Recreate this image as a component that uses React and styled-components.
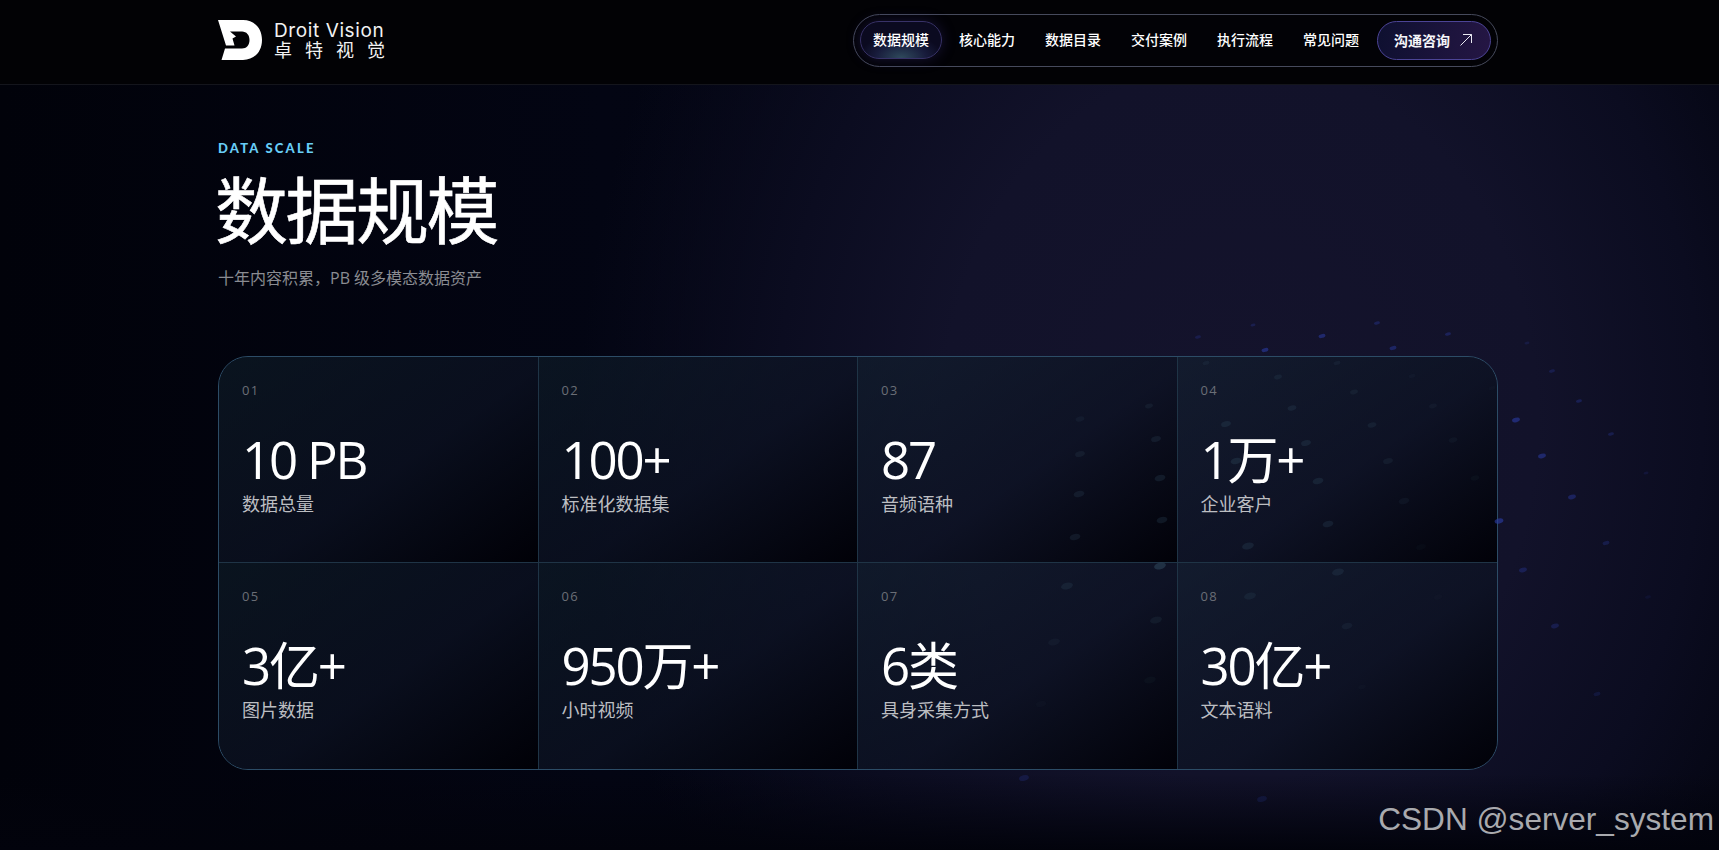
import React from 'react'
import styled, { createGlobalStyle } from 'styled-components'

const GlobalStyle = createGlobalStyle`
  html, body { margin: 0; padding: 0; background: #01020a; }
  body { font-family: "Open Sans", "Noto Sans CJK SC", sans-serif; color: #fff; overflow: hidden; }
`

const stats = [
  { no: '01', value: '10 PB', label: '数据总量' },
  { no: '02', value: '100+', label: '标准化数据集' },
  { no: '03', value: '87', label: '音频语种' },
  { no: '04', value: '1万+', label: '企业客户' },
  { no: '05', value: '3亿+', label: '图片数据' },
  { no: '06', value: '950万+', label: '小时视频' },
  { no: '07', value: '6类', label: '具身采集方式' },
  { no: '08', value: '30亿+', label: '文本语料' },
]

const links = ['核心能力', '数据目录', '交付案例', '执行流程', '常见问题']

// particles behind the glass: x, y, rx, opacity
const blueDots = [
  [1198, 337, 3, 0.28], [1253, 325, 2.5, 0.3], [1322, 336, 3.5, 0.55], [1265, 350, 3.5, 0.6],
  [1377, 323, 3, 0.38], [1448, 334, 3, 0.4], [1393, 348, 3.5, 0.48], [1527, 343, 2.5, 0.22],
  [1552, 371, 3, 0.3], [1579, 401, 3, 0.36], [1516, 420, 4, 0.62], [1611, 434, 3, 0.32],
  [1542, 456, 4, 0.55], [1646, 473, 2.5, 0.18], [1572, 497, 4, 0.45], [1499, 521, 4.5, 0.65],
  [1606, 543, 3.5, 0.3], [1523, 570, 4, 0.36], [1555, 626, 4, 0.32], [1648, 597, 3, 0.12],
  [1597, 694, 3.5, 0.2], [1024, 778, 5, 0.26], [1262, 799, 5, 0.2],
]

const glassDots = [
  [1149, 406, 4, 0.2], [1080, 419, 4.5, 0.16], [1156, 439, 5, 0.25], [1080, 454, 5, 0.22],
  [1160, 478, 5.5, 0.28], [1079, 494, 5.5, 0.25], [1162, 520, 5.5, 0.28], [1075, 537, 5.5, 0.25],
  [1160, 566, 6, 0.55], [1226, 424, 5, 0.3], [1292, 408, 4.5, 0.28], [1278, 377, 4, 0.24],
  [1206, 363, 3.5, 0.18], [1337, 363, 3.5, 0.18], [1354, 392, 4, 0.2], [1306, 443, 5, 0.3],
  [1236, 461, 5.5, 0.34], [1318, 481, 5.5, 0.3], [1328, 524, 5.5, 0.28], [1248, 546, 6, 0.3],
  [1412, 376, 3.5, 0.1], [1492, 388, 3.5, 0.07], [1433, 406, 4, 0.14], [1372, 425, 4.5, 0.24],
  [1453, 440, 4.5, 0.12], [1388, 461, 5, 0.2], [1475, 478, 4.5, 0.09], [1404, 501, 5.5, 0.14],
  [1421, 547, 5, 0.07], [1067, 586, 6, 0.26], [1338, 572, 6, 0.28], [1250, 596, 6, 0.24],
  [1156, 620, 6, 0.2], [1347, 626, 5.5, 0.18], [1054, 642, 6, 0.14], [1150, 680, 6, 0.09],
  [1041, 704, 5.5, 0.06], [1438, 597, 4.5, 0.06], [1362, 687, 4, 0.06],
]

function Particles() {
  const ellipse = ([x, y, rx, opacity], fill) => (
    <ellipse
      key={`${x}-${y}`}
      cx={x}
      cy={y}
      rx={rx}
      ry={rx * 0.55}
      fill={fill}
      opacity={opacity}
      transform={`rotate(-14 ${x} ${y})`}
    />
  )
  return (
    <ParticleField viewBox="0 0 1719 850" aria-hidden="true">
      {blueDots.map(d => ellipse(d, '#2a3aa0'))}
      {glassDots.map(d => ellipse(d, '#30495c'))}
    </ParticleField>
  )
}

function Logo() {
  return (
    <svg width="44" height="40" viewBox="0 0 44 40">
      <path
        fill="#fff"
        d="M0 0H25C36 0 44 8 44 20C44 32 36 40 25 40H3.5L7 28.5H24C28.5 28.5 31.5 25 31.5 20C31.5 15 28.5 11.5 24 11.5H12L18 16.5L14.5 18.5L16.5 25.5H8Z"
      />
    </svg>
  )
}

export default function App() {
  return (
    <Page>
      <GlobalStyle />
      <Particles />
      <Header>
        <HeaderInner>
          <Brand>
            <Logo />
            <BrandText>
              <BrandName>Droit Vision</BrandName>
              <BrandCn>卓特视觉</BrandCn>
            </BrandText>
          </Brand>
          <Nav>
            <ActiveLink>数据规模</ActiveLink>
            {links.map(l => <NavLink key={l}>{l}</NavLink>)}
            <Contact>
              沟通咨询
              <svg width="14" height="14" viewBox="0 0 14 14" fill="none" stroke="#e8e8f0" strokeWidth="1">
                <path d="M1.5 12.5L12.5 1.5M4 1.5H12.5V10" />
              </svg>
            </Contact>
          </Nav>
        </HeaderInner>
      </Header>
      <Main>
        <Eyebrow>DATA SCALE</Eyebrow>
        <Title>数据规模</Title>
        <Subtitle>十年内容积累，PB 级多模态数据资产</Subtitle>
        <StatGrid>
          {stats.map(s => (
            <StatCell key={s.no}>
              <StatNo>{s.no}</StatNo>
              <StatValue>{s.value}</StatValue>
              <StatLabel>{s.label}</StatLabel>
            </StatCell>
          ))}
        </StatGrid>
      </Main>
      <Watermark>CSDN @server_system</Watermark>
    </Page>
  )
}

const Page = styled.div`
  position: relative;
  width: 1719px;
  height: 850px;
  overflow: hidden;
  background:
    linear-gradient(to bottom, transparent 91%, #02030c 100%),
    radial-gradient(ellipse 660px 800px at 1240px 420px, #14132c 0%, #12122a 45%, #0b0c20 70%, transparent 100%),
    linear-gradient(to right, #01020a 0%, #030513 35%, #01020a 100%);
`

const ParticleField = styled.svg`
  position: absolute;
  inset: 0;
  width: 100%;
  height: 100%;
  z-index: 1;
  pointer-events: none;
`

const Header = styled.header`
  position: relative;
  z-index: 2;
  height: 85px;
  background: #020205;
  border-bottom: 1px solid #14151c;
  box-sizing: border-box;
`

const HeaderInner = styled.div`
  width: 1280px;
  height: 100%;
  margin-left: 218px;
  padding: 0 0 4px;
  box-sizing: border-box;
  display: flex;
  align-items: center;
  justify-content: space-between;
`

const Brand = styled.div`
  display: flex;
  align-items: center;
  gap: 12px;
`

const BrandText = styled.div`
  display: flex;
  flex-direction: column;
`

const BrandName = styled.span`
  font-family: "Inter", sans-serif;
  font-size: 19px;
  line-height: 19px;
  letter-spacing: 0.6px;
  white-space: nowrap;
  color: #f2f2f2;
`

const BrandCn = styled.span`
  font-family: "Noto Sans CJK SC", sans-serif;
  font-size: 18px;
  line-height: 19px;
  letter-spacing: 13px;
  white-space: nowrap;
  margin-right: -13px;
  color: #f2f2f2;
`

const Nav = styled.nav`
  display: flex;
  align-items: center;
  height: 53px;
  padding: 0 6px;
  box-sizing: border-box;
  border: 1px solid #464a5c;
  border-radius: 27px;
  background: #020206;
`

const NavLink = styled.a`
  padding: 0 15px;
  font-size: 14px;
  line-height: 20px;
  font-weight: 500;
  color: #fff;
  white-space: nowrap;
`

const ActiveLink = styled(NavLink)`
  padding: 0 12px;
  height: 38px;
  line-height: 36px;
  margin-right: 2px;
  box-sizing: border-box;
  border: 1px solid #383268;
  border-radius: 19px;
  background: radial-gradient(ellipse 42px 24px at 50% 100%, #2f4a5c 0%, #181c3c 60%, #0b0a20 100%);
  box-shadow: 0 0 14px rgba(56, 44, 120, 0.4);
`

const Contact = styled.a`
  display: flex;
  align-items: center;
  gap: 9px;
  margin-left: 3px;
  height: 39px;
  padding: 0 17px 0 16px;
  box-sizing: border-box;
  font-size: 14px;
  font-weight: 700;
  color: #f6f6fa;
  border: 1px solid #4c4496;
  border-radius: 20px;
  background: linear-gradient(100deg, #0e1030, #251644);
`

const Main = styled.main`
  position: relative;
  width: 1280px;
  margin-left: 218px;
  padding-top: 55px;
`

const Eyebrow = styled.div`
  font-family: "Lato", sans-serif;
  font-size: 13px;
  line-height: 16px;
  font-weight: 900;
  letter-spacing: 2.2px;
  color: #68cdf6;
`

const Title = styled.h1`
  margin: 6px 0 0 -3px;
  font-family: "Noto Sans CJK SC", sans-serif;
  font-size: 73px;
  line-height: 88px;
  font-weight: 400;
  letter-spacing: -2.5px;
  -webkit-text-stroke: 0.6px #fff;
  color: #fff;
`

const Subtitle = styled.p`
  margin: 16px 0 0;
  font-size: 16px;
  line-height: 24px;
  color: #8a8c92;
`

const StatGrid = styled.div`
  display: grid;
  grid-template-columns: repeat(4, 1fr);
  grid-template-rows: repeat(2, 206px);
  margin-top: 66px;
  width: 1280px;
  box-sizing: border-box;
  border: 1px solid #2c4c66;
  border-radius: 30px;
  overflow: hidden;
`

const StatCell = styled.div`
  padding: 23px 23px;
  box-sizing: border-box;
  background: linear-gradient(145deg, rgba(18, 36, 48, 0.5) 0%, rgba(12, 18, 34, 0.72) 55%, rgba(0, 0, 6, 0.94) 100%);
  border-right: 1px solid #1f3446;
  border-bottom: 1px solid #1f3446;
  &:nth-child(4n) { border-right: 0; }
  &:nth-child(n + 5) { border-bottom: 0; }
`

const StatNo = styled.div`
  position: relative;
  z-index: 2;
  font-size: 13px;
  line-height: 20px;
  letter-spacing: 1.4px;
  color: #6a6e76;
`

const StatValue = styled.div`
  position: relative;
  z-index: 2;
  margin-top: 28px;
  font-size: 51px;
  line-height: 62px;
  letter-spacing: -2.2px;
  color: #fff;
  white-space: nowrap;
`

const StatLabel = styled.div`
  position: relative;
  z-index: 2;
  margin-top: 1px;
  font-size: 18px;
  line-height: 26px;
  color: #bcbec2;
`

const Watermark = styled.div`
  position: absolute;
  z-index: 3;
  right: 5px;
  bottom: 12px;
  font-family: "Liberation Sans", sans-serif;
  font-size: 31.6px;
  line-height: 38px;
  color: #a9aaae;
`
